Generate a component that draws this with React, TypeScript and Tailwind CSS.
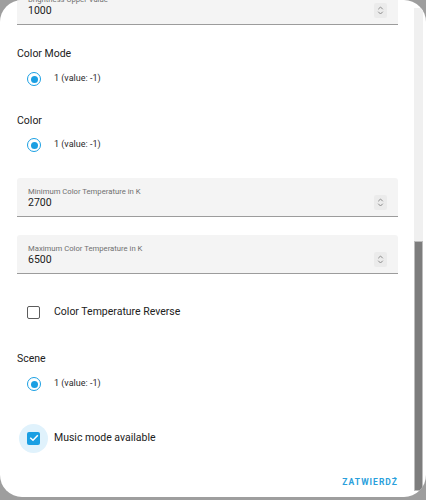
import React from 'react'

const font = { fontFamily: 'Roboto, "Noto Sans", sans-serif' }

function Spinner() {
  return (
    <div className="w-[13px] h-[15px] bg-[#ebebeb] rounded-[2px] flex items-center justify-center">
      <svg width="7" height="11" viewBox="0 0 7 11" fill="none" stroke="#8a8a8a" strokeWidth="1" strokeLinecap="round" strokeLinejoin="round">
        <path d="M1.5 4 L3.5 2 L5.5 4" />
        <path d="M1.5 7 L3.5 9 L5.5 7" />
      </svg>
    </div>
  )
}

function NumberField({ label, value, className = '' }: { label: string, value: string, className?: string }) {
  return (
    <div className={`relative h-[39px] bg-[#f4f4f4] border-b border-[#9c9c9c] rounded-t-[3px] ${className}`}>
      <div className="absolute left-[11px] top-[9px] text-[7.7px] leading-[10px] text-[#707070]">{label}</div>
      <div className="absolute left-[11px] top-[18px] text-[10.5px] leading-[14px] text-[#212121]">{value}</div>
      <div className="absolute right-[11px] top-[17px]">
        <Spinner />
      </div>
    </div>
  )
}

function SectionTitle({ children, className = '' }: { children: React.ReactNode, className?: string }) {
  return <div className={`h-[16px] leading-[16px] text-[10.5px] text-[#212121] ${className}`}>{children}</div>
}

function Radio({ label, className = '' }: { label: string, className?: string }) {
  return (
    <div className={`h-[28px] flex items-center ${className}`}>
      <div className="ml-[10px] w-[14px] h-[14px] rounded-full border-[1.5px] border-[#1a9fe3] flex items-center justify-center">
        <div className="w-[7px] h-[7px] rounded-full bg-[#1a9fe3]" />
      </div>
      <span className="ml-[13px] text-[9px] text-[#2a2a2a]">{label}</span>
    </div>
  )
}

function Checkbox({ label, checked, className = '' }: { label: string, checked?: boolean, className?: string }) {
  return (
    <div className={`h-[28px] flex items-center ${className}`}>
      <div className="relative ml-[10px] w-[13px] h-[13px] flex items-center justify-center">
        {checked && <div className="absolute -left-[8px] -top-[8px] w-[29px] h-[29px] rounded-full bg-[#e0f2fc]" />}
        {checked ? (
          <div className="relative w-[13px] h-[13px] rounded-[2px] bg-[#1a9fe3] flex items-center justify-center">
            <svg width="10" height="10" viewBox="0 0 10 10" fill="none" stroke="white" strokeWidth="1.5" strokeLinecap="square">
              <path d="M1.8 5.2 L4 7.3 L8.3 2.8" />
            </svg>
          </div>
        ) : (
          <div className="w-[13px] h-[13px] rounded-[2px] border-[1.5px] border-[#5c5c5c]" />
        )}
      </div>
      <span className="relative ml-[14px] text-[10.5px] text-[#212121]">{label}</span>
    </div>
  )
}

export default function App() {
  return (
    <div className="w-[426px] h-[500px] bg-[#9e9e9e] overflow-hidden" style={font}>
      <div className="h-[497px] bg-white rounded-[22px] flex overflow-hidden">
        <div className="w-[414px] pl-[17px] pr-[16px] flex flex-col">
          <NumberField label="Brightness Upper Value" value="1000" className="-mt-[14px]" />

          <SectionTitle className="mt-[21px]">Color Mode</SectionTitle>
          <Radio label="1 (value: -1)" className="mt-[3px]" />

          <SectionTitle className="mt-[20px]">Color</SectionTitle>
          <Radio label="1 (value: -1)" className="mt-[2px]" />

          <NumberField label="Minimum Color Temperature in K" value="2700" className="mt-[19px]" />
          <NumberField label="Maximum Color Temperature in K" value="6500" className="mt-[18px]" />

          <Checkbox label="Color Temperature Reverse" className="mt-[24px]" />

          <SectionTitle className="mt-[25px]">Scene</SectionTitle>
          <Radio label="1 (value: -1)" className="mt-[3px]" />

          <Checkbox label="Music mode available" checked className="mt-[26px]" />

          <div className="mt-[20px] h-[20px] flex justify-end items-center">
            <span className="text-[8.5px] font-bold tracking-[0.12em] text-[#2a9fdc]">ZATWIERDŹ</span>
          </div>
        </div>
        <div className="w-[10px] flex flex-col pt-[8px] pb-[6px]">
          <div className="h-[233px] bg-[#f0f0f0] mr-[1px]" />
          <div className="flex-1 bg-[#7d7d7d] border border-[#bdbdbd] mr-[1px]" />
        </div>
      </div>
    </div>
  )
}
